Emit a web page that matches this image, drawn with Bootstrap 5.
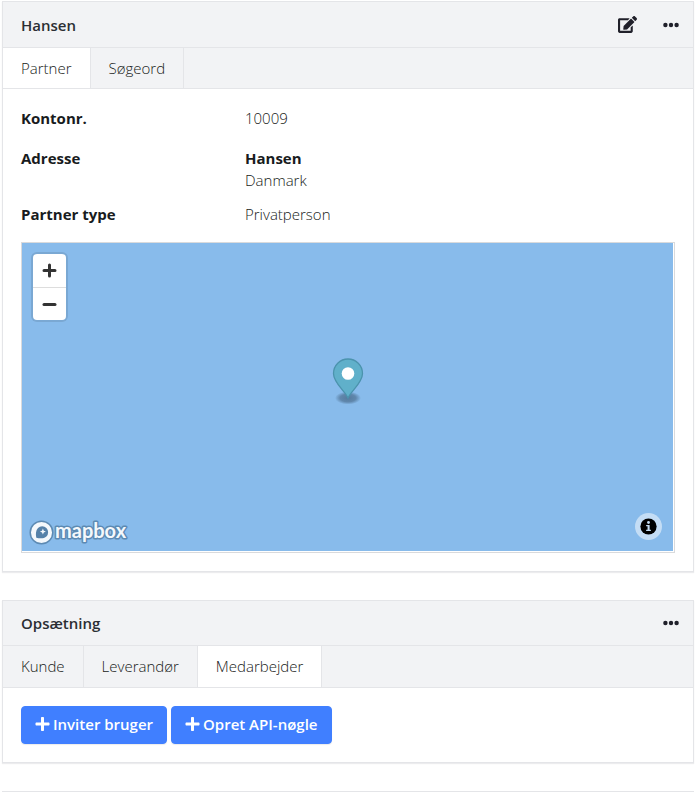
<!DOCTYPE html>
<html lang="da">
<head>
<meta charset="utf-8">
<meta name="viewport" content="width=device-width, initial-scale=1">
<title>Hansen</title>
<link href="https://cdn.jsdelivr.net/npm/bootstrap@5.3.0/dist/css/bootstrap.min.css" rel="stylesheet">
<style>
body { font-family: "Segoe UI", "Open Sans", "Noto Sans", sans-serif; font-size: 15px; line-height: 22px; font-weight: 350; color: #181b20; overflow-x: hidden; }
.page { padding: 1px 1px 0 2px; overflow: hidden; }
.panel { --bs-card-border-color: #e4e5e8; --bs-card-border-radius: 0; --bs-card-inner-border-radius: 0; margin-bottom: 28px; box-shadow: 0 1px 1px #ececee; }
.panel-head { background: #f2f3f5; border-bottom: 1px solid #e4e5e8; height: 45px; padding: 0 14px 0 18px; }
.panel-head.tall { height: 46px; }
.panel-title { font-size: 15px; line-height: 22px; font-weight: 550; margin: 0; color: #2b2e33; }
.icon-btn { padding: 0; border: 0; background: none; color: #20202a; display: flex; }
.head-tools { gap: 26px; }
.panel-tabs { background: #f2f3f5; border-bottom: 1px solid #e4e5e8; }
.panel-tabs .nav-link { color: #181b20; padding: 9px 18px 10px; line-height: 22px; border-radius: 0; border-right: 1px solid #e4e5e8; font-weight: 350; }
.panel-tabs .nav-link.active { background: #fff; color: #181b20; }
.panel-tabs.short .nav-link { padding-bottom: 9px; }
.panel-body { padding: 18px; }
.facts { --bs-gutter-x: 18px; margin-bottom: 0; }
.facts dt, .facts strong { font-weight: 700; }
.facts dt, .facts dd { margin-bottom: 18px; }
.facts .tight { margin-bottom: 12px; }
.facts .last { margin-bottom: 17px; }
.map-frame { border: 1px solid #d9dadc; padding: 0 1px 1px 0; }
.map { background: #88bbeb; height: 308px; position: relative; }
.zoom { position: absolute; left: 11px; top: 11px; width: 33px; border-radius: 4px; background: #fff; box-shadow: 0 0 0 2px rgba(0,0,0,.1); }
.zoom button { border: 0; background: none; width: 100%; height: 33px; padding: 0; display: flex; align-items: center; justify-content: center; }
.zoom button + button { border-top: 1px solid #ddd; }
.pin { position: absolute; left: 50%; top: 50%; transform: translate(-50%, -50%); margin-top: -16px; }
.map-logo { position: absolute; left: 7px; bottom: 6px; display: flex; }
.map-info { position: absolute; right: 11px; bottom: 11px; width: 27px; height: 27px; border: 0; border-radius: 50%; background: rgba(255,255,255,.5); padding: 0; display: flex; align-items: center; justify-content: center; }
.action { --bs-btn-bg: #407fff; --bs-btn-border-color: #407fff; --bs-btn-padding-x: 13px; --bs-btn-border-radius: 4px; --bs-btn-font-size: 15px; --bs-btn-line-height: 22px; --bs-btn-font-weight: 600; padding-top: 6px; padding-bottom: 8px; display: flex; align-items: center; gap: 3px; box-shadow: 0 1px 1px rgba(0,0,0,.08); }
.next-panel { border-top: 1px solid #e4e5e8; }
</style>
</head>
<body>
<svg width="0" height="0" class="d-none" aria-hidden="true">
  <symbol id="dots" viewBox="0 0 16 16"><circle cx="2.4" cy="8" r="2.2"/><circle cx="8" cy="8" r="2.2"/><circle cx="13.6" cy="8" r="2.2"/></symbol>
  <symbol id="plus" viewBox="0 0 448 512"><path d="M416 208H272V64c0-17.700-14.300-32-32-32h-32c-17.700 0-32 14.300-32 32v144H32c-17.700 0-32 14.300-32 32v32c0 17.700 14.300 32 32 32h144v144c0 17.700 14.300 32 32 32h32c17.700 0 32-14.300 32-32V304h144c17.700 0 32-14.300 32-32v-32c0-17.700-14.300-32-32-32z"/></symbol>
</svg>
<main class="page">
  <section class="card panel">
    <header class="panel-head tall d-flex align-items-center justify-content-between">
      <h2 class="panel-title">Hansen</h2>
      <div class="head-tools d-flex align-items-center">
        <button class="icon-btn" type="button" aria-label="Rediger"><svg width="19" height="17" viewBox="0 0 576 512" fill="currentColor"><path d="M402.600 83.200l90.200 90.200c3.800 3.800 3.800 10 0 13.800L274.400 405.600l-92.800 10.300c-12.400 1.400-22.900-9.100-21.500-21.500l10.300-92.800L388.800 83.200c3.800-3.800 10-3.800 13.800 0zm162-22.900l-48.800-48.800c-15.200-15.200-39.900-15.200-55.200 0l-35.400 35.400c-3.800 3.800-3.800 10 0 13.800l90.200 90.200c3.800 3.800 10 3.800 13.800 0l35.400-35.400c15.200-15.300 15.200-40 0-55.200zM384 346.200V448H64V128h229.800c3.200 0 6.200-1.300 8.500-3.500l40-40c7.600-7.600 2.200-20.500-8.500-20.500H48C21.500 64 0 85.500 0 112v352c0 26.500 21.500 48 48 48h352c26.500 0 48-21.500 48-48V306.200c0-10.700-12.900-16-20.500-8.500l-40 40c-2.200 2.300-3.500 5.300-3.500 8.500z"/></svg></button>
        <button class="icon-btn" type="button" aria-label="Mere"><svg width="16" height="16" fill="currentColor"><use href="#dots"/></svg></button>
      </div>
    </header>
    <nav class="nav panel-tabs short" aria-label="Hansen">
      <a class="nav-link active" aria-current="page" href="#partner">Partner</a>
      <a class="nav-link" href="#sogeord">Søgeord</a>
    </nav>
    <div class="panel-body">
      <dl class="row facts">
        <dt class="col-4">Kontonr.</dt><dd class="col-8">10009</dd>
        <dt class="col-4 tight">Adresse</dt><dd class="col-8 tight"><strong>Hansen</strong><br>Danmark</dd>
        <dt class="col-4 last">Partner type</dt><dd class="col-8 last">Privatperson</dd>
      </dl>
      <div class="map-frame">
        <div class="map">
          <div class="zoom">
            <button type="button" aria-label="Zoom ind"><svg width="15" height="15" stroke="#333" stroke-width="3" stroke-linecap="round"><path d="M2 7.500h11M7.500 2v11"/></svg></button>
            <button type="button" aria-label="Zoom ud"><svg width="15" height="15" stroke="#333" stroke-width="3" stroke-linecap="round"><path d="M2 7.500h11"/></svg></button>
          </div>
          <svg class="pin" width="34" height="50" viewBox="0 0 34 50" aria-hidden="true">
            <defs><radialGradient id="shade"><stop offset="0" stop-color="#123" stop-opacity=".42"/><stop offset=".6" stop-color="#123" stop-opacity=".34"/><stop offset="1" stop-color="#123" stop-opacity="0"/></radialGradient></defs>
            <ellipse cx="17" cy="42" rx="13" ry="6.500" fill="url(#shade)"/>
            <path d="M17 42C14 35 2.500 27 2.500 17.500a14.500 14.500 0 0 1 29 0C31.500 27 20 35 17 42z" fill="#60b0ca" stroke="#4b93ad" stroke-width="1.300"/>
            <circle cx="17" cy="17.500" r="6.300" fill="#fff"/>
          </svg>
          <a class="map-logo" href="#mapbox" aria-label="mapbox"><svg width="100" height="26" viewBox="0 0 100 26">
            <circle cx="12.500" cy="13.500" r="11.300" fill="#f4f8fc" stroke="#5c8ab3" stroke-width="1.500"/>
            <path d="M7.300 18.700c-.7-3.500-.6-7.300 1.700-9.700a5.900 5.900 0 0 1 8.400 8.400c-2.300 2.300-6.400 2.100-10.100 1.300z" fill="#5581a9"/>
            <path d="M13.900 9.600l.9 2.100 2.100.9-2.100.9-.9 2.100-.9-2.100-2.100-.9 2.100-.9z" fill="#f4f8fc"/>
            <text x="26" y="19" font-family="Lato, sans-serif" font-weight="700" font-size="20" fill="#f4f8fc" stroke="#5c8ab3" stroke-width="3" stroke-linejoin="round" paint-order="stroke">mapbox</text>
          </svg></a>
          <button class="map-info" type="button" aria-label="Kortinformation"><svg width="17" height="17" viewBox="0 0 18 18"><circle cx="9" cy="9" r="8.600"/><circle cx="9" cy="4.800" r="1.500" fill="#c4ddf5"/><path d="M6.500 7.500h3.700v5h1.300v1.300h-5v-1.300H8V8.800H6.500z" fill="#c4ddf5"/></svg></button>
        </div>
      </div>
    </div>
  </section>

  <section class="card panel">
    <header class="panel-head d-flex align-items-center justify-content-between">
      <h2 class="panel-title">Opsætning</h2>
      <button class="icon-btn" type="button" aria-label="Mere"><svg width="16" height="16" fill="currentColor"><use href="#dots"/></svg></button>
    </header>
    <nav class="nav panel-tabs" aria-label="Opsætning">
      <a class="nav-link" href="#kunde">Kunde</a>
      <a class="nav-link" href="#leverandor">Leverandør</a>
      <a class="nav-link active" aria-current="page" href="#medarbejder">Medarbejder</a>
    </nav>
    <div class="panel-body d-flex flex-wrap">
      <button class="btn btn-primary action me-1" type="button"><svg width="15" height="16" fill="currentColor" aria-hidden="true"><use href="#plus"/></svg>Inviter bruger</button>
      <button class="btn btn-primary action" type="button"><svg width="15" height="16" fill="currentColor" aria-hidden="true"><use href="#plus"/></svg>Opret API-nøgle</button>
    </div>
  </section>

  <div class="next-panel"></div>
</main>
<script src="https://cdn.jsdelivr.net/npm/bootstrap@5.3.0/dist/js/bootstrap.bundle.min.js"></script>
</body>
</html>
